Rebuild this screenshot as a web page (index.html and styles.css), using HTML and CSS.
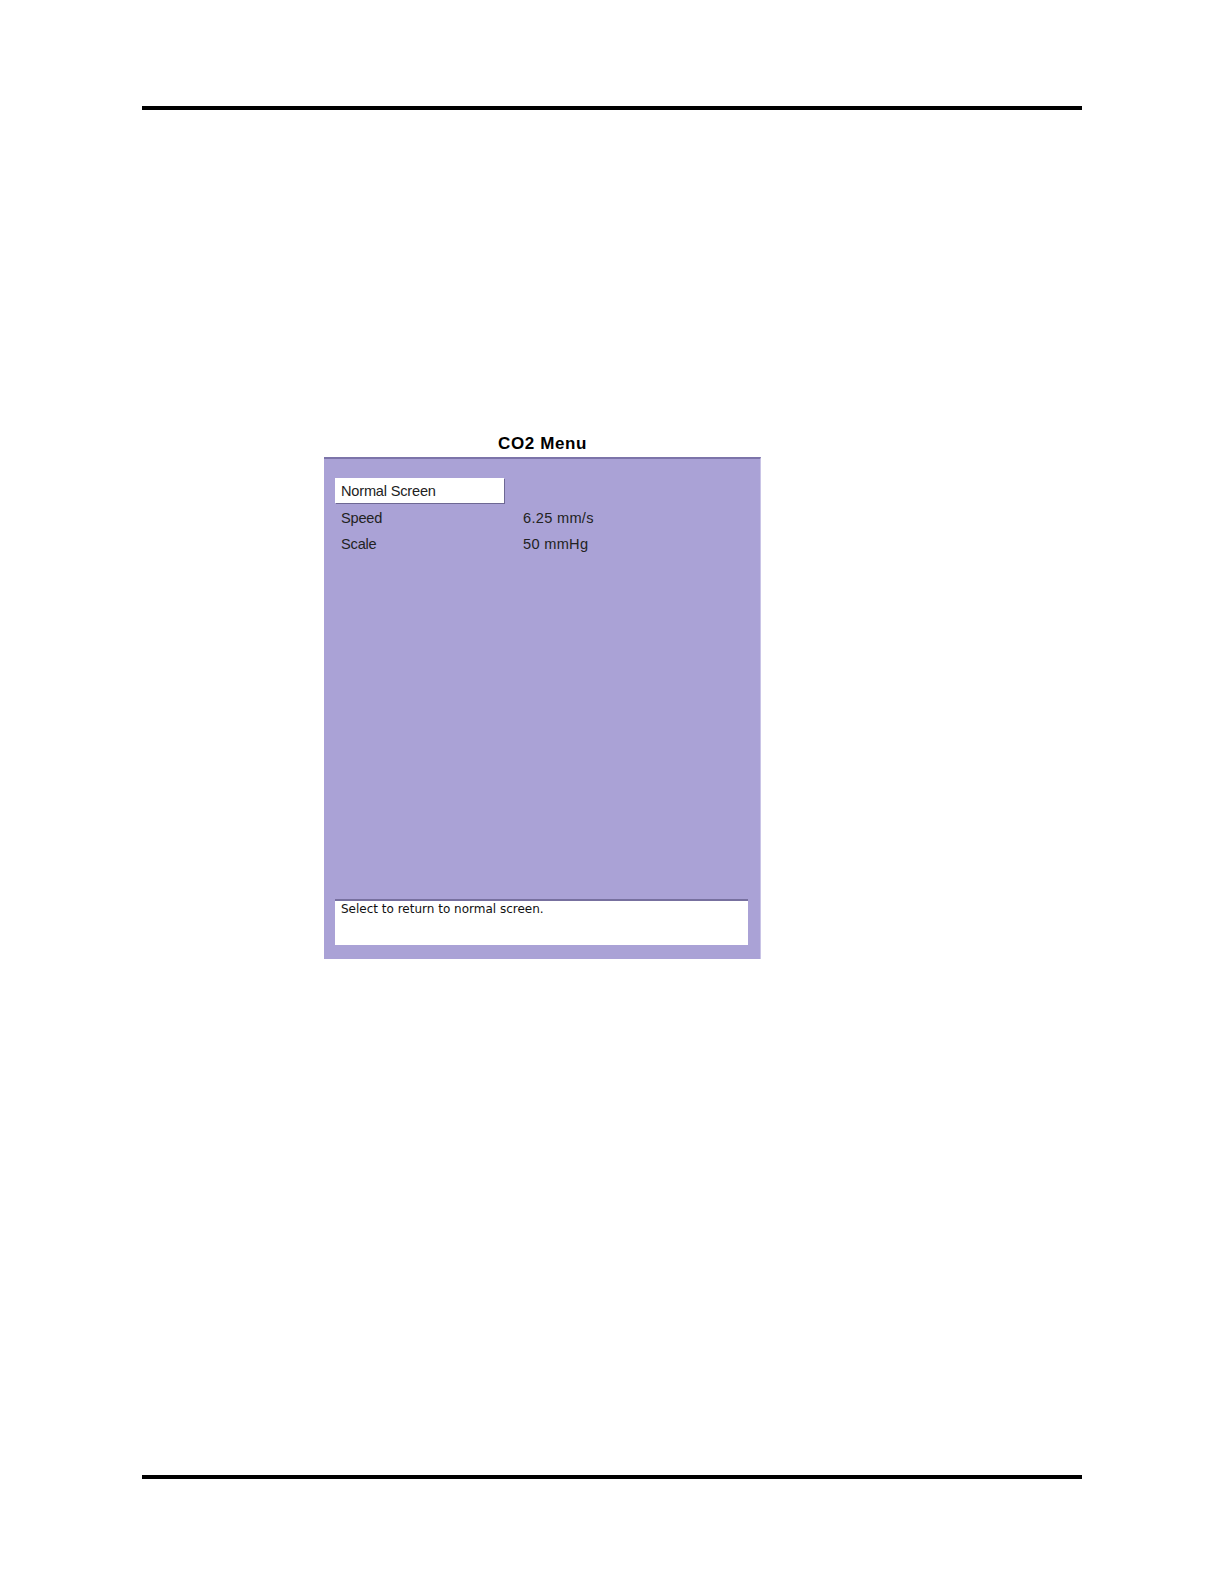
FILE: index.html
```html
<!DOCTYPE html>
<html>
<head>
<meta charset="utf-8">
<link rel="stylesheet" href="styles.css">
</head>
<body>
<div class="page">
  <div class="rule rule-top"></div>
  <div class="figure">
    <div class="title">CO2 Menu</div>
    <div class="panel">
      <div class="menu">
        <div class="row selected"><span class="label">Normal Screen</span></div>
        <div class="row"><span class="label">Speed</span><span class="value">6.25 mm/s</span></div>
        <div class="row"><span class="label">Scale</span><span class="value">50 mmHg</span></div>
      </div>
      <div class="help">Select to return to normal screen.</div>
    </div>
  </div>
  <div class="rule rule-bottom"></div>
</div>
</body>
</html>
```
FILE: styles.css
```css
html, body {
  margin: 0;
  padding: 0;
  background: #ffffff;
}
.page {
  width: 1224px;
  height: 1584px;
  padding-top: 106px;
  box-sizing: border-box;
  font-family: "Liberation Sans", Arial, sans-serif;
}
.rule {
  margin-left: 142px;
  width: 940px;
  height: 4px;
  background: #000;
}
.figure {
  margin-top: 323px;
  margin-left: 324px;
  width: 437px;
}
.title {
  text-align: center;
  font-weight: bold;
  font-size: 17px;
  letter-spacing: 0.6px;
  line-height: 20px;
  height: 24px;
  color: #000;
  padding-top: 1px;
  box-sizing: border-box;
}
.panel {
  height: 502px;
  box-sizing: border-box;
  background: #aaa2d6;
  border-top: 2px solid #7c74a9;
  border-right: 1px solid #c9c4e6;
  padding: 19px 11px 14px 11px;
  display: flex;
  flex-direction: column;
}
.menu {
  display: flex;
  flex-direction: column;
}
.row {
  display: flex;
  height: 26px;
  align-items: center;
  font-size: 14.6px;
  color: #222;
  letter-spacing: -0.2px;
}
.row .value {
  letter-spacing: 0.3px;
}
.row .label {
  width: 188px;
  padding-left: 6px;
  box-sizing: border-box;
}
.row.selected {
  width: 169px;
  height: 25px;
  background: #ffffff;
  box-shadow: 1px 1px 0 #6e6894;
  margin-bottom: 2px;
}
.help {
  margin-top: auto;
  height: 46px;
  box-sizing: border-box;
  width: 413px;
  background: #ffffff;
  border-top: 2px solid #77709f;
  padding: 1px 6px;
  font-family: "DejaVu Sans", Verdana, sans-serif;
  font-size: 12px;
  line-height: 14px;
  color: #111;
}
.rule-bottom {
  margin-top: 516px;
}
```
